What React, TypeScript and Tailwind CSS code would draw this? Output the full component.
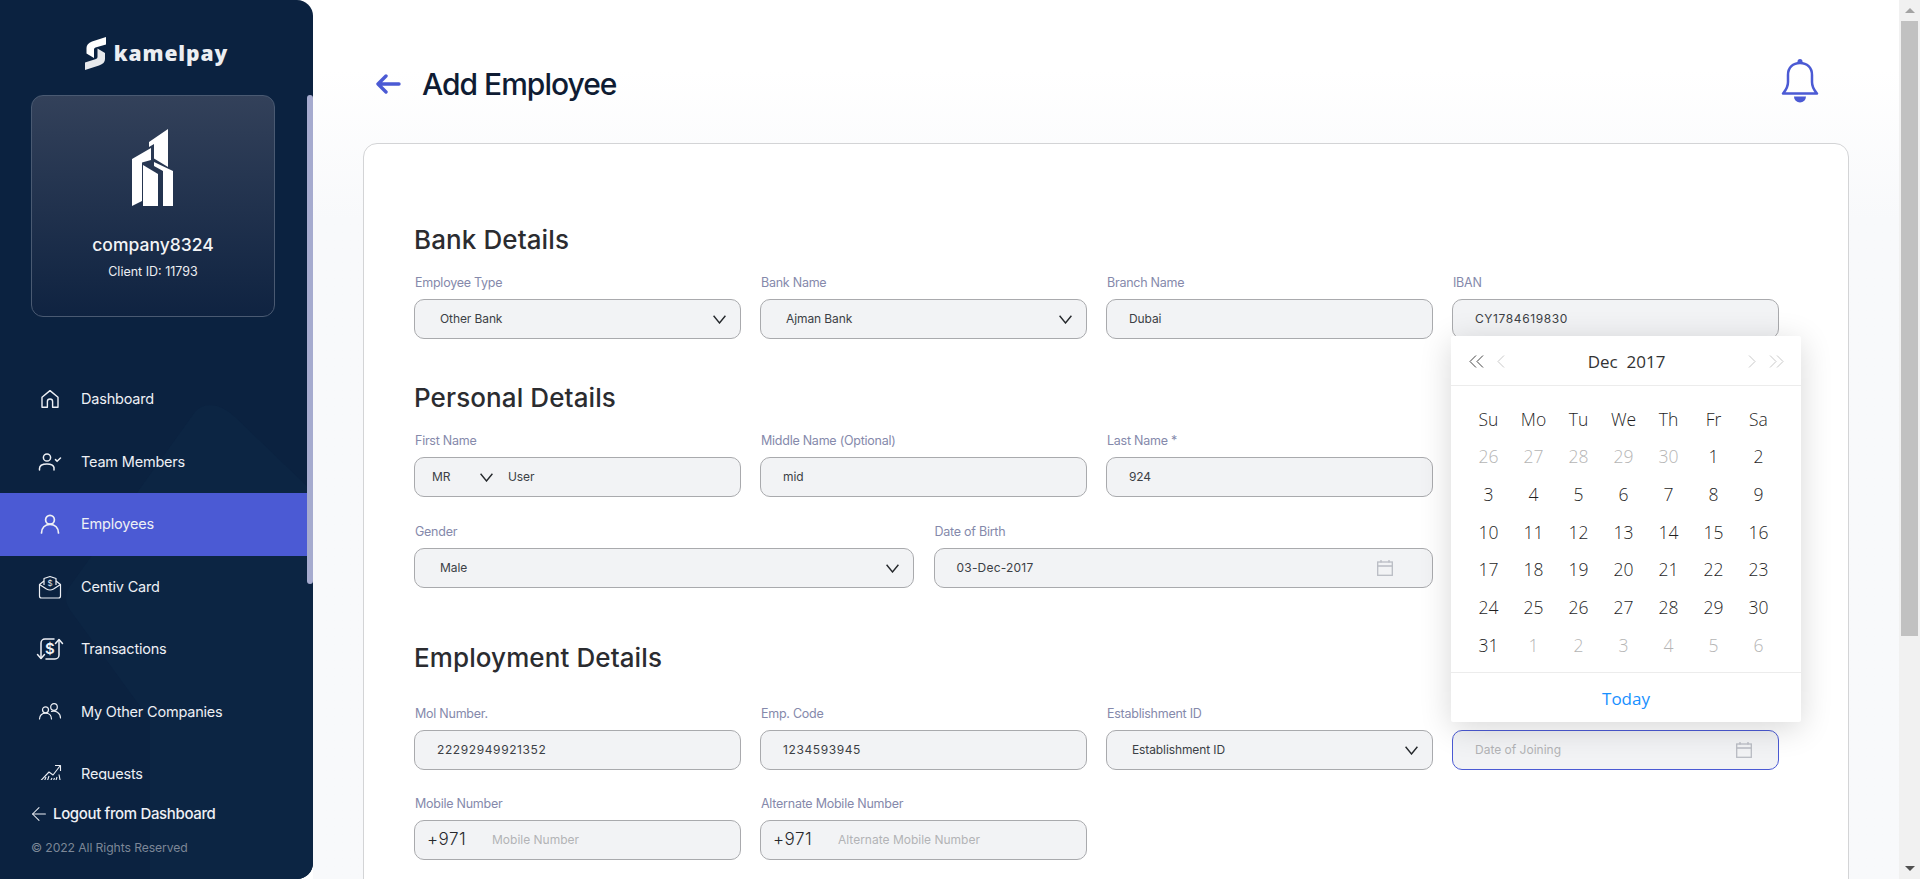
import React from 'react';
import { ArrowLeft } from 'lucide-react';

const sans = "font-['Inter','Noto_Sans',sans-serif]";

const weekRows = [
  ['26', '27', '28', '29', '30', '1', '2'],
  ['3', '4', '5', '6', '7', '8', '9'],
  ['10', '11', '12', '13', '14', '15', '16'],
  ['17', '18', '19', '20', '21', '22', '23'],
  ['24', '25', '26', '27', '28', '29', '30'],
  ['31', '1', '2', '3', '4', '5', '6'],
];

const HomeIcon = () => (
  <svg width="20" height="20" viewBox="0 0 20 20" fill="none" stroke="currentColor" strokeWidth="1.4" strokeLinejoin="round">
    <path d="M2 8.2 10 1.600l8 6.600v10H12.600v-5.600a2.600 2.600 0 0 0-5.200 0v5.600H2z" />
  </svg>
);

const TeamIcon = () => (
  <svg width="24" height="20" viewBox="0 0 24 20" fill="none" stroke="currentColor" strokeWidth="1.5" strokeLinecap="round">
    <circle cx="9" cy="5.500" r="3.600" />
    <path d="M1.500 18v-1.500c0-3 2.400-4.600 7.500-4.600s6.500 1.400 7 3.600V18" />
    <path d="m17.500 7.600 1.600 1.600 3.400-3.200" />
  </svg>
);

const UserIcon = () => (
  <svg width="20" height="20" viewBox="0 0 20 20" fill="none" stroke="currentColor" strokeWidth="1.700" strokeLinecap="round">
    <circle cx="10" cy="5.800" r="4.400" />
    <path d="M1.500 19c0-5 3.400-8.700 8.500-8.700s8.500 3.700 8.500 8.700" />
  </svg>
);

const CardIcon = () => (
  <svg width="24" height="24" viewBox="0 0 24 24" fill="none" stroke="currentColor" strokeWidth="1.200" strokeLinejoin="round">
    <path d="M6 10V3.500L12 1.500l6 2V10" />
    <path d="M6 6 1.500 9.500v11.500a2 2 0 0 0 2 2h17a2 2 0 0 0 2-2V9.500L18 6" />
    <path d="m1.500 9.500 7 4.500q3.500 2 7 0l7-4.500" />
    <text x="12" y="11" textAnchor="middle" fontSize="8" fill="currentColor" stroke="none" fontFamily="Inter, sans-serif">$</text>
  </svg>
);

const TransactionsIcon = () => (
  <svg width="28" height="24" viewBox="0 0 28 24" fill="none" stroke="currentColor" strokeWidth="1.500" strokeLinecap="round" strokeLinejoin="round">
    <path d="M5 21V6a4 4 0 0 1 4-4h9" />
    <path d="M1.500 17.500 5 21.500l3.500-4" />
    <path d="M23 3v15a4 4 0 0 1-4 4h-9" />
    <path d="m19.500 6.500 3.500-4 3.500 4" />
    <text x="14" y="17" textAnchor="middle" fontSize="15" fontWeight="600" fill="currentColor" stroke="none" fontFamily="Inter, sans-serif">$</text>
  </svg>
);

const CompaniesIcon = () => (
  <svg width="24" height="20" viewBox="0 0 24 20" fill="none" stroke="currentColor" strokeWidth="1.200" strokeLinecap="round">
    <circle cx="7.500" cy="7.800" r="3" />
    <path d="M1.500 17c0-3.500 2.500-5.800 6-5.800s6 2.300 6 5.800" />
    <circle cx="16" cy="5" r="3.300" />
    <path d="M13.500 9.500c3.800-1.200 8.900 1 9 6.500" />
  </svg>
);

const RequestsIcon = () => (
  <svg width="24" height="20" viewBox="0 0 24 20" fill="none" stroke="currentColor" strokeWidth="1.100" strokeLinejoin="round">
    <path d="M1 18.500 11 8l4 3 7-9" />
    <path d="M17 1.500h5.500V7" />
    <path d="M1 18.500h21.500L21 10.500" />
    <path d="m6 18 2-5m1 5 2-6m1 6 2-4m1 4 1.500-4m1 4 1.500-5" />
  </svg>
);

const BuildingLogo = () => (
  <svg width="42" height="77" viewBox="0 0 42 77" fill="white">
    <path d="M17 13 36 0v38l-14-8.500V15L17 18z" />
    <path d="M0 30 19 19v12l-9 2.500V72L0 77z" />
    <path d="M11 36 26 45v32H11z" />
    <path d="M22 33 41 42v35H31V42L22 37z" />
  </svg>
);

const KamelMark = () => (
  <svg width="22" height="33" viewBox="0 0 22 33" fill="white">
    <path d="M21 0 7 4.500Q1.500 6.500 1.500 11v5.500L9 21V12.500q0-1.500 1.500-2L21 7.500z" />
    <path d="M0 33l14-4.500q6-2 6-6.500v-6l-7.500-4.500V20q0 1.500-1.500 2L0 25.500z" opacity="0.9" />
  </svg>
);

const BellIcon = () => (
  <svg width="38" height="46" viewBox="0 0 38 46" fill="none" stroke="#4b5ad4" strokeWidth="2.500">
    <circle cx="19" cy="3.500" r="2.500" fill="#4b5ad4" stroke="none" />
    <path d="M7 24V17C7 9.500 12 5 19 5s12 4.500 12 12v7c0 6 3 9 5 11.500H2C4 33 7 30 7 24z" strokeLinejoin="round" />
    <path d="M13 38.500h12a6 6 0 0 1-12 0z" fill="#4b5ad4" stroke="none" />
  </svg>
);

const CalendarIcon = () => (
  <svg width="16" height="16" viewBox="0 0 16 16" fill="none" stroke="#b9bcc4" strokeWidth="1.300">
    <rect x="0.700" y="2" width="14.600" height="13.300" />
    <path d="M0.700 6h14.600M4 0v2.500M12 0v2.500" />
  </svg>
);

const Chevron = () => (
  <svg width="13" height="9" viewBox="0 0 13 9" fill="none" stroke="#25282c" strokeWidth="1.400">
    <path d="M.6.800 6.500 8l5.900-7.200" />
  </svg>
);

const BackArrow = () => (
  <svg width="25" height="20" viewBox="0 0 25 20" fill="none" stroke="#4b5ad4" strokeWidth="3.400" strokeLinecap="round" strokeLinejoin="round">
    <path d="M23 10H2.500M10 2 2 10l8 8" />
  </svg>
);

const Field = ({ label, children }: { label: string; children: React.ReactNode }) => (
  <div className="flex min-w-0 flex-col">
    <label className="mb-[8px] h-[16px] pl-[1px] text-[12.500px] leading-[16px] tracking-[-0.25px] text-[#8589ab]">{label}</label>
    {children}
  </div>
);

const boxClass =
  'flex h-[40px] items-center rounded-[10px] border bg-[#f2f3f5] text-[12px] tracking-[-0.1px] text-[#3c3f45]';

const TextBox = ({ value, digits }: { value: string; digits?: boolean }) => (
  <div className={`${boxClass} border-[#a9aaad] pl-[22px] ${digits ? 'tracking-[0.6px]' : ''}`}>{value}</div>
);

const SelectBox = ({ value }: { value: string }) => (
  <div className={`${boxClass} justify-between border-[#a9aaad] pl-[25px] pr-[14px]`}>
    <span>{value}</span>
    <Chevron />
  </div>
);

const PhoneBox = ({ placeholder }: { placeholder: string }) => (
  <div className={`${boxClass} border-[#a9aaad] pl-[12px]`}>
    <span className="w-[65px] text-[17px] font-light tracking-[0.5px] text-[#26282c]">+971</span>
    <span className="text-[#b2b3b6] tracking-normal">{placeholder}</span>
  </div>
);

const NavItem = ({ icon, label, active }: { icon: React.ReactNode; label: string; active?: boolean }) => (
  <div className={`flex h-[62.500px] shrink-0 items-center ${active ? 'bg-[#4b5ad4]' : ''}`}>
    <div className="flex w-[81px] shrink-0 justify-center pl-[19px] pr-[1px] text-[#eef0f5]">{icon}</div>
    <span className="text-[14.500px] tracking-[-0.2px] text-[#eef0f5]">{label}</span>
  </div>
);

const DatePopup = () => (
  <div className="absolute left-[1451px] top-[336px] z-10 flex h-[386px] w-[350px] flex-col rounded-[2px] bg-white font-['Open_Sans',sans-serif] text-[17.500px] font-light text-[#1f1f1f] shadow-[0_6px_32px_rgba(0,0,0,0.16)]">
    <div className="flex h-[50px] items-center justify-between border-b border-[#ececec] pl-[18px] pr-[17px] pt-[1px]">
      <div className="flex w-[40px] items-center gap-[13px]">
        <svg width="15" height="13" viewBox="0 0 15 13" fill="none" stroke="#444"><path d="M7 .5 1 6.500l6 6M14 .5 8 6.500l6 6" /></svg>
        <svg width="8" height="13" viewBox="0 0 8 13" fill="none" stroke="#c8c8c8"><path d="M7 .5 1 6.500l6 6" /></svg>
      </div>
      <span className="whitespace-pre text-[17px] font-medium leading-none text-[#333]">Dec  2017</span>
      <div className="flex w-[40px] items-center justify-end gap-[13px]">
        <svg width="8" height="13" viewBox="0 0 8 13" fill="none" stroke="#c8c8c8"><path d="m1 .5 6 6-6 6" /></svg>
        <svg width="15" height="13" viewBox="0 0 15 13" fill="none" stroke="#c8c8c8"><path d="m1 .5 6 6-6 6M8 .5l6 6-6 6" /></svg>
      </div>
    </div>
    <div className="flex-1 pl-[15px] pr-[20px] pt-[14px]">
      <div className="grid h-[37.700px] grid-cols-7 items-center text-center">
        {['Su', 'Mo', 'Tu', 'We', 'Th', 'Fr', 'Sa'].map((d) => (
          <span key={d}>{d}</span>
        ))}
      </div>
      {weekRows.map((row, i) => (
        <div key={i} className="grid h-[37.700px] grid-cols-7 items-center text-center">
          {row.map((d, j) => {
            const muted = (i === 0 && j < 5) || (i === 5 && j > 0);
            return (
              <span key={j} className={muted ? 'text-[#b5b5b5]' : ''}>
                {d}
              </span>
            );
          })}
        </div>
      ))}
    </div>
    <div className="flex h-[50px] items-center justify-center border-t border-[#ececec] pt-[2px] text-[17px] font-normal text-[#1890ff]">Today</div>
  </div>
);

const Sidebar = () => (
  <aside className="relative flex h-[879px] w-[313px] shrink-0 flex-col overflow-hidden rounded-r-[16px] bg-[#0b2240]">
    <svg className="absolute left-0 top-[400px]" width="313" height="479" viewBox="0 0 313 479" fill="#0c2543">
      <path d="M210 5q12 0 25 12l78 75v387H150V320l-80-110q-8-12 0-24L195 12q6-7 15-7z" />
    </svg>
    <div className="relative flex h-[95px] shrink-0 items-start justify-center gap-[7px] pt-[37px]">
      <KamelMark />
      <span className="mt-[5px] font-['Noto_Sans',sans-serif] text-[21px] font-black leading-[22px] tracking-[0.9px] text-[#eceef2]">kamelpay</span>
    </div>
    <div className="relative mx-[31px] flex h-[222px] w-[244px] shrink-0 flex-col items-center rounded-[12px] border border-[#4a5a72] bg-gradient-to-b from-[#33415a] to-[#0f2341] pt-[33px]">
      <BuildingLogo />
      <div className="mt-[27px] text-[17.500px] font-medium leading-[24px] text-[#f3f4f6]">company8324</div>
      <div className="mt-[7px] text-[12.500px] leading-[16px] text-[#eceef2]">Client ID: 11793</div>
    </div>
    <nav className="relative mt-[51px] flex h-[412px] flex-col overflow-hidden pr-[6px]">
      <NavItem icon={<HomeIcon />} label="Dashboard" />
      <NavItem icon={<TeamIcon />} label="Team Members" />
      <NavItem icon={<UserIcon />} label="Employees" active />
      <NavItem icon={<CardIcon />} label="Centiv Card" />
      <NavItem icon={<TransactionsIcon />} label="Transactions" />
      <NavItem icon={<CompaniesIcon />} label="My Other Companies" />
      <NavItem icon={<RequestsIcon />} label="Requests" />
    </nav>
    <div className="relative mt-[18px] flex h-[32px] items-center gap-[3px] pl-[28px] text-[15px] font-medium tracking-[-0.35px] text-[#eef0f5]">
      <ArrowLeft size={22} strokeWidth={1.100} />
      Logout from Dashboard
    </div>
    <div className="relative mt-[9px] pl-[31px] text-[12.200px] tracking-[-0.1px] text-[#7c8797]">© 2022 All Rights Reserved</div>
    <div className="absolute right-0 top-[95px] h-[489px] w-[6px] rounded-[3px] bg-[#a6abcf]" />
  </aside>
);

const Scrollbar = () => (
  <div className="flex h-[879px] w-[21px] shrink-0 flex-col items-center bg-[#f1f1f1]">
    <div className="flex h-[21px] w-full items-center justify-center">
      <div className="h-0 w-0 border-x-[5px] border-b-[5px] border-x-transparent border-b-[#a3a3a3]" />
    </div>
    <div className="h-[615px] w-[17px] bg-[#c1c1c1]" />
    <div className="flex-1" />
    <div className="flex h-[21px] w-full items-center justify-center">
      <div className="h-0 w-0 border-x-[5px] border-t-[5px] border-x-transparent border-t-[#505050]" />
    </div>
  </div>
);

const Heading = ({ children, className }: { children: React.ReactNode; className: string }) => (
  <h2 className={`text-[26px] font-medium leading-[32px] tracking-[0.1px] text-[#2b2c30] ${className}`}>{children}</h2>
);

export default function App() {
  return (
    <div className={`relative flex h-[879px] w-[1920px] overflow-hidden bg-white ${sans}`}>
      <Sidebar />
      <main className="h-[879px] flex-1 overflow-hidden bg-gradient-to-b from-white from-[8%] to-[#f8f9fb] to-[25%] pl-[50px] pr-[50px]">
        <div className="flex h-[143px] items-start justify-between">
          <div className="mt-[59px] flex items-center gap-[21px] pl-[13px]">
            <BackArrow />
            <h1 className="text-[30px] font-medium leading-[50px] tracking-[-1px] text-[#0f1c33]">Add Employee</h1>
          </div>
          <div className="mr-[30px] mt-[58px]">
            <BellIcon />
          </div>
        </div>
        <section className="h-[760px] rounded-t-[14px] border border-[#d3d4d6] bg-white pl-[50px] pr-[69px] pt-[80px]">
          <Heading className="">Bank Details</Heading>
          <div className="mt-[19px] grid grid-cols-4 gap-x-[19px]">
            <Field label="Employee Type"><SelectBox value="Other Bank" /></Field>
            <Field label="Bank Name"><SelectBox value="Ajman Bank" /></Field>
            <Field label="Branch Name"><TextBox value="Dubai" /></Field>
            <Field label="IBAN"><TextBox value="CY1784619830" digits /></Field>
          </div>
          <Heading className="mt-[43px]">Personal Details</Heading>
          <div className="mt-[19px] grid grid-cols-4 gap-x-[19px]">
            <Field label="First Name">
              <div className={`${boxClass} border-[#a9aaad] pl-[17px]`}>
                <span className="w-[48px]">MR</span>
                <Chevron />
                <span className="ml-[15px]">User</span>
              </div>
            </Field>
            <Field label="Middle Name (Optional)"><TextBox value="mid" /></Field>
            <Field label="Last Name *"><TextBox value="924" /></Field>
          </div>
          <div className="mt-[27px] grid grid-cols-2 gap-x-[20px] pr-[346px]">
            <Field label="Gender"><SelectBox value="Male" /></Field>
            <Field label="Date of Birth">
              <div className={`${boxClass} justify-between border-[#a9aaad] pl-[22px] pr-[39px] tracking-[0.2px]`}>
                <span>03-Dec-2017</span>
                <CalendarIcon />
              </div>
            </Field>
          </div>
          <Heading className="mt-[54px]">Employment Details</Heading>
          <div className="mt-[32px] grid grid-cols-4 gap-x-[19px]">
            <Field label="Mol Number."><TextBox value="22292949921352" digits /></Field>
            <Field label="Emp. Code"><TextBox value="1234593945" digits /></Field>
            <Field label="Establishment ID"><SelectBox value="Establishment ID" /></Field>
            <Field label="">
              <div className={`${boxClass} justify-between border-[#4b5ad4] pl-[22px] pr-[26px] text-[#b2b3b6] tracking-normal`}>
                <span>Date of Joining</span>
                <CalendarIcon />
              </div>
            </Field>
          </div>
          <div className="mt-[26px] grid grid-cols-4 gap-x-[19px]">
            <Field label="Mobile Number"><PhoneBox placeholder="Mobile Number" /></Field>
            <Field label="Alternate Mobile Number"><PhoneBox placeholder="Alternate Mobile Number" /></Field>
          </div>
        </section>
      </main>
      <Scrollbar />
      <DatePopup />
    </div>
  );
}
